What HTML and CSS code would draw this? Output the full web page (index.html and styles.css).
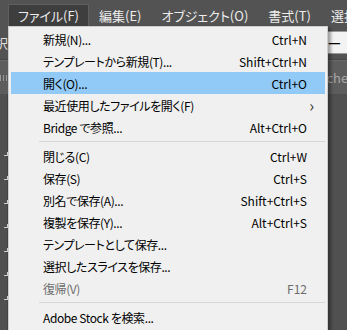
FILE: index.html
```html
<!DOCTYPE html>
<html lang="ja">
<head>
    <meta charset="UTF-8">
    <title>ファイルメニュー</title>
    <link rel="stylesheet" href="styles.css">
</head>
<body>
    <div class="menubar">
        <div class="top-item active">ファイル(F)</div>
        <div class="top-item">編集(E)</div>
        <div class="top-item">オブジェクト(O)</div>
        <div class="top-item">書式(T)</div>
        <div class="top-item">選択</div>
    </div>
    <div class="controlbar">
        <span class="label">択</span>
        <span class="field">—</span>
    </div>
    <div class="tabbar">
        <span class="ruler"></span>
        <span class="tab">checked</span>
    </div>
    <div class="workspace">
        <div class="tools">
            <span class="tool"></span>
            <span class="tool"></span>
            <span class="tool"></span>
            <span class="tool"></span>
            <span class="tool"></span>
            <span class="tool"></span>
            <span class="tool"></span>
        </div>
    </div>

    <div class="menu">
        <div class="item"><span class="name">新規(N)...</span><span class="key">Ctrl+N</span></div>
        <div class="item"><span class="name">テンプレートから新規(T)...</span><span class="key">Shift+Ctrl+N</span></div>
        <div class="item hover"><span class="name">開く(O)...</span><span class="key">Ctrl+O</span></div>
        <div class="item"><span class="name">最近使用したファイルを開く(F)</span><span class="arrow">›</span></div>
        <div class="item"><span class="name">Bridge で参照...</span><span class="key">Alt+Ctrl+O</span></div>
        <div class="sep"></div>
        <div class="item"><span class="name">閉じる(C)</span><span class="key">Ctrl+W</span></div>
        <div class="item"><span class="name">保存(S)</span><span class="key">Ctrl+S</span></div>
        <div class="item"><span class="name">別名で保存(A)...</span><span class="key">Shift+Ctrl+S</span></div>
        <div class="item"><span class="name">複製を保存(Y)...</span><span class="key">Alt+Ctrl+S</span></div>
        <div class="item"><span class="name">テンプレートとして保存...</span></div>
        <div class="item"><span class="name">選択したスライスを保存...</span></div>
        <div class="item disabled"><span class="name">復帰(V)</span><span class="key">F12</span></div>
        <div class="sep"></div>
        <div class="item"><span class="name">Adobe Stock を検索...</span></div>
    </div>
</body>
</html>
```

FILE: styles.css
```css
body {
    margin: 0;
    width: 347px;
    height: 330px;
    overflow: hidden;
    position: relative;
    background-color: #535353;
    font-family: "Noto Sans CJK JP", "Noto Sans", sans-serif;
    font-feature-settings: "palt";
}
.menubar {
    height: 26px;
    display: flex;
    padding-left: 8px;
    padding-top: 4px;
    box-sizing: border-box;
    color: #ededed;
    font-size: 13px;
}
.top-item {
    padding: 0 9px;
    line-height: 21px;
    white-space: nowrap;
    border: 1px solid transparent;
    border-bottom: none;
}
.top-item.active {
    background-color: #3e3e3e;
    border-color: #606060;
    width: 64px;
}
.controlbar {
    height: 33px;
    display: flex;
    justify-content: space-between;
    align-items: center;
    border-bottom: 1px solid #464646;
}
.label {
    color: #dcdcdc;
    font-size: 13px;
    margin-left: -5px;
}
.field {
    width: 30px;
    height: 21px;
    margin-right: -12px;
    background-color: #f3f3f3;
    border: 1px solid #9a9a9a;
    line-height: 21px;
    padding-left: 5px;
    font-size: 14px;
    font-weight: bold;
    color: #000;
}
.tabbar {
    height: 33px;
    display: flex;
    justify-content: space-between;
    align-items: center;
    background-color: #5d5d5d;
    border-top: 1px solid #6a6a6a;
}
.ruler {
    width: 8px;
    height: 6px;
    background: repeating-linear-gradient(90deg, #9a9a9a 0 1px, transparent 1px 3px);
}
.tab {
    color: #a8a8a8;
    font-size: 13px;
    margin-right: -30px;
}
.workspace {
    height: 240px;
    background-color: #505050;
}
.tools {
    width: 8px;
    height: 100%;
    border-right: 1px solid #444;
    display: flex;
    flex-direction: column;
    padding-top: 58px;
    box-sizing: border-box;
    gap: 20px;
}
.tool {
    width: 3px;
    height: 3px;
    margin-left: 4px;
    border-right: 1px solid #cfcfcf;
    border-bottom: 1px solid #cfcfcf;
}
.menu {
    position: absolute;
    left: 8px;
    top: 26px;
    width: 316px;
    padding: 1px 1px 4px;
    background-color: #f0f0f0;
    border: 1px solid #cdcdcd;
    box-shadow: 3px 2px 3px rgba(0, 0, 0, 0.35);
    font-size: 12px;
    color: #000;
}
.item {
    height: 22px;
    margin: 0 1px;
    padding: 0 18px 0 32px;
    display: flex;
    justify-content: space-between;
    align-items: center;
    white-space: nowrap;
}
.name {
    letter-spacing: -0.4px;
}
.item.hover {
    background-color: #91c9f7;
}
.item.disabled {
    color: #6d6d6d;
}
.arrow {
    font-size: 16px;
    margin-right: -7px;
    color: #333;
}
.sep {
    height: 1px;
    margin: 3px 1px 3px 29px;
    background-color: #d7d7d7;
}
```
